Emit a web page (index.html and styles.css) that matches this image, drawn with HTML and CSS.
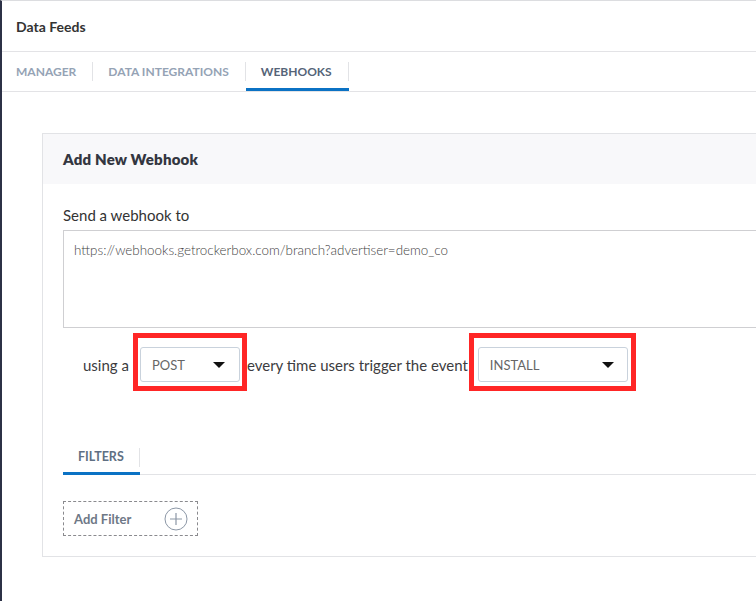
FILE: index.html
```html
<!DOCTYPE html>
<html>
<head>
<meta charset="utf-8">
<link rel="stylesheet" href="styles.css">
</head>
<body>
<div class="app">
  <header class="title">Data Feeds</header>
  <nav class="tabs">
    <div class="tab first"><span class="tab-label">MANAGER</span></div>
    <span class="sep"></span>
    <div class="tab"><span class="tab-label">DATA INTEGRATIONS</span></div>
    <span class="sep"></span>
    <div class="tab active"><span class="tab-label">WEBHOOKS</span><span class="sep"></span></div>
  </nav>
  <main class="content">
    <section class="card">
      <div class="card-head">Add New Webhook</div>
      <div class="card-body">
        <div class="label">Send a webhook to</div>
        <div class="textarea">https://webhooks.getrockerbox.com/branch?advertiser=demo_co</div>
        <div class="sentence">
          <span class="words">using a</span>
          <div class="select-wrap">
            <div class="select small"><span>POST</span><span class="caret"></span></div>
            <span class="highlight h1"></span>
          </div>
          <span class="words">every time users trigger the event</span>
          <div class="select-wrap">
            <div class="select large"><span>INSTALL</span><span class="caret"></span></div>
            <span class="highlight h2"></span>
          </div>
        </div>
        <div class="subtabs">
          <div class="subtab active"><span class="subtab-label">FILTERS</span><span class="sep"></span></div>
        </div>
        <div class="add-filter">
          <span>Add Filter</span>
          <svg class="plus" width="24" height="24" viewBox="0 0 24 24">
            <circle cx="12" cy="12" r="11" fill="none" stroke="#8c97a6" stroke-width="1"/>
            <path d="M12 6v12M6 12h12" stroke="#8c97a6" stroke-width="1.2" fill="none"/>
          </svg>
        </div>
      </div>
    </section>
  </main>
</div>
</body>
</html>
```

FILE: styles.css
```css
* { box-sizing: border-box; }
html, body { margin: 0; padding: 0; overflow: hidden; background: #fff; }
body { font-family: "Lato", "Liberation Sans", sans-serif; color: #333; }
.app {
  width: 756px;
  height: 601px;
  border-left: 2px solid #2c3146;
  border-top: 1px solid #dcdde0;
  overflow: hidden;
}
.title {
  height: 51px;
  padding-left: 14px;
  display: flex;
  align-items: center;
  font-size: 14px;
  font-weight: 700;
  color: #333;
  border-bottom: 1px solid #e3e3e6;
}
.tabs {
  height: 40px;
  display: flex;
  align-items: stretch;
  border-bottom: 1px solid #e3e3e6;
}
.tab {
  display: flex;
  align-items: center;
  padding-left: 15px;
  font-size: 12px;
  font-weight: 700;
  color: #95a3b5;
}
.tab.first { padding-left: 14px; }
.tab-label { padding-right: 16px; }
.sep {
  align-self: center;
  width: 1px;
  height: 19px;
  background: #e2e3e6;
}
.tab.active {
  color: #556478;
  border-bottom: 3px solid #0b72c4;
  padding-top: 3px;
}
.content {
  padding: 41px 0 0 40px;
}
.card {
  width: 760px;
  border: 1px solid #e2e3e6;
  height: 424px;
}
.card-head {
  height: 50px;
  background: #f8f8fa;
  display: flex;
  align-items: center;
  padding-left: 20px;
  font-size: 15px;
  font-weight: 800;
  color: #333640;
  letter-spacing: 0.2px;
}
.card-body {
  padding: 21px 0 0 20px;
}
.label {
  font-size: 15px;
  color: #333;
  line-height: 20px;
}
.textarea {
  margin-top: 5px;
  height: 98px;
  border: 1px solid #cfcfd2;
  padding: 10px 10px;
  font-size: 13.4px;
  font-weight: 300;
  color: #444;
  line-height: 18px;
}
.sentence {
  display: flex;
  align-items: center;
  margin-top: 19px;
  padding-left: 20px;
  height: 35px;
}
.words {
  font-size: 15px;
  color: #3c3c40;
}
.select-wrap {
  position: relative;
}
.select {
  height: 35px;
  border: 1px solid #c9d2dc;
  border-radius: 3px;
  display: flex;
  align-items: center;
  justify-content: space-between;
  padding: 0 14px 0 11px;
  font-size: 13px;
  color: #666;
}
.select.small { width: 100px; margin: 0 7px 0 11px; }
.select.large { width: 150px; margin: 0 0 0 10px; padding-right: 13px; }
.caret {
  width: 0; height: 0;
  border-left: 6px solid transparent;
  border-right: 6px solid transparent;
  border-top: 6px solid #111;
}
.highlight {
  position: absolute;
  border: 5px solid #ff2626;
  top: -14px;
  height: 58px;
}
.h1 { left: 4px; width: 114px; }
.h2 { left: 1px; width: 167px; }
.subtabs {
  margin-top: 63px;
  height: 30px;
  display: flex;
  border-bottom: 1px solid #e2e3e6;
}
.subtab {
  display: flex;
  align-items: center;
  padding-left: 15px;
  padding-bottom: 5px;
  font-size: 12.5px;
  font-weight: 700;
  color: #5f6f83;
  border-bottom: 3px solid #0b72c4;
  margin-bottom: -1px;
}
.subtab .sep { margin-top: 3px; }
.subtab-label { padding-right: 15px; }
.add-filter {
  margin-top: 26px;
  width: 135px;
  height: 35px;
  border: 1px dashed #8a8a8e;
  display: flex;
  align-items: center;
  justify-content: space-between;
  padding: 0 9px 0 10px;
  font-size: 13px;
  font-weight: 700;
  color: #6e7886;
}
.plus { display: block; }
```
